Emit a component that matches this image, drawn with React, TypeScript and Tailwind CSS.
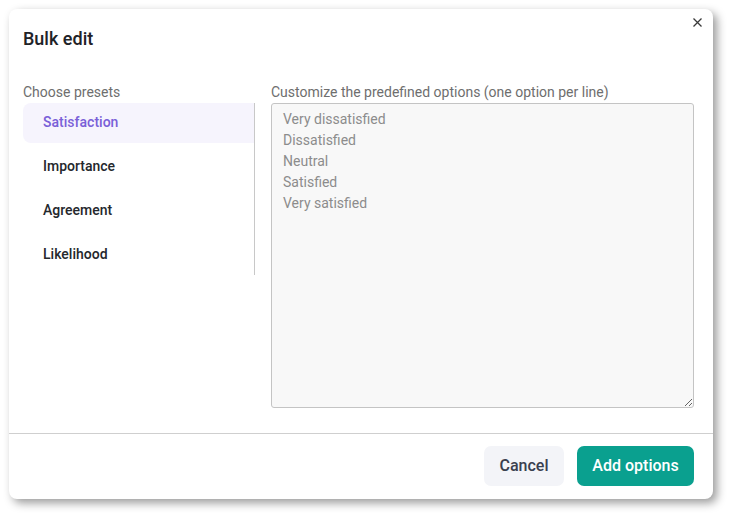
import React from "react";

const presets = ["Satisfaction", "Importance", "Agreement", "Likelihood"];
const medium = { fontFamily: "'Roboto Medium', Roboto, 'Noto Sans', sans-serif" };

export default function App() {
  return (
    <div
      className="w-[735px] h-[521px] bg-white pl-[9px] pt-[9px]"
      style={{ fontFamily: "Roboto, 'Noto Sans', sans-serif" }}
    >
      <div className="relative w-[704px] h-[490px] bg-white rounded-[8px] shadow-[4px_4px_10px_rgba(0,0,0,0.4)] flex flex-col">
        <button className="absolute right-[10px] top-[7px] w-[12px] h-[12px] flex items-center justify-center">
          <svg width="9" height="9" viewBox="0 0 9 9" fill="none" stroke="#3a3a3a" strokeWidth="1.3">
            <path d="M0.5 0.5L8.5 8.5M8.5 0.5L0.5 8.5" />
          </svg>
        </button>
        <div className="pl-[14px] pt-[18px] h-[51px]">
          <h1 className="text-[18px] leading-[24px] font-medium text-[#1f2328]" style={medium}>
            Bulk edit
          </h1>
        </div>
        <div className="flex pl-[14px] pr-[19px] pt-[22px] h-[373px]">
          <div className="w-[232px] flex flex-col">
            <div className="text-[14px] leading-[20px] text-[#6e6e6e] h-[21px]">Choose presets</div>
            <div className="flex flex-col gap-[4px] border-r border-[#c8c8c8]">
              {presets.map((p, i) => (
                <div
                  key={p}
                  style={medium}
                  className={
                    "h-[40px] flex items-center pl-[20px] pb-[1px] text-[14px] font-medium rounded-l-[8px] " +
                    (i === 0 ? "bg-[#f6f4fd] text-[#7a60d8]" : "text-[#25282d]")
                  }
                >
                  {p}
                </div>
              ))}
            </div>
          </div>
          <div className="flex-1 flex flex-col pl-[16px]">
            <div className="text-[14px] leading-[20px] text-[#6e6e6e] h-[21px]">
              Customize the predefined options (one option per line)
            </div>
            <textarea
              className="w-[423px] h-[305px] bg-[#f8f8f8] border border-[#c4c4c4] rounded-[3px] px-[11px] pt-[5px] text-[14px] leading-[21px] text-[#8c8c8c] outline-none"
              defaultValue={"Very dissatisfied\nDissatisfied\nNeutral\nSatisfied\nVery satisfied"}
              readOnly
            />
          </div>
        </div>
        <div className="border-t border-[#cfcfcf] flex-1 flex items-start justify-end gap-[13px] pt-[12px] pr-[19px]">
          <button
            style={medium}
            className="h-[40px] w-[80px] rounded-[7px] bg-[#f3f4f8] text-[16px] font-medium text-[#3a4050]"
          >
            Cancel
          </button>
          <button
            style={medium}
            className="h-[40px] w-[117px] rounded-[7px] bg-[#0aa08f] text-[16px] font-medium text-white"
          >
            Add options
          </button>
        </div>
      </div>
    </div>
  );
}
